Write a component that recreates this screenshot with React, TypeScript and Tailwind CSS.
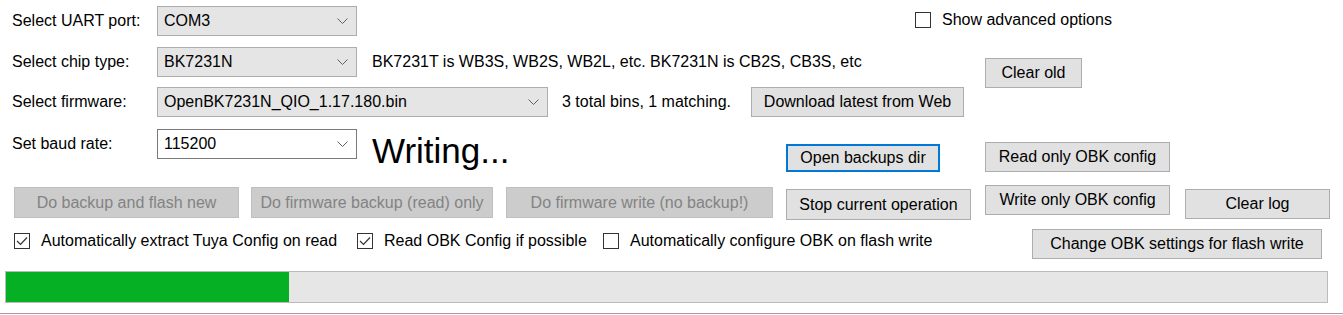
import React from "react";

function Chevron() {
  return (
    <svg width="11" height="7" viewBox="0 0 11 7" className="shrink-0">
      <polyline points="0.5,0.5 5.5,5.5 10.5,0.5" fill="none" stroke="#606060" strokeWidth="1" />
    </svg>
  );
}

function Combo({ value, className }: { value: string; className: string }) {
  return (
    <div className={`flex h-[30px] shrink-0 items-center justify-between pl-[6px] pr-[8px] ${className}`}>
      <span>{value}</span>
      <Chevron />
    </div>
  );
}

function Btn({
  children,
  className,
  disabled = false,
  focused = false,
}: {
  children: React.ReactNode;
  className: string;
  disabled?: boolean;
  focused?: boolean;
}) {
  const look = disabled
    ? "border border-[#bfbfbf] bg-[#cccccc] text-[#838383]"
    : focused
    ? "border-2 border-[#0078d7] bg-[#e1e1e1] text-black"
    : "border border-[#adadad] bg-[#e1e1e1] text-black";
  return (
    <div className={`flex shrink-0 items-center justify-center whitespace-nowrap ${look} ${className}`}>
      {children}
    </div>
  );
}

function Check({ checked, label, className }: { checked: boolean; label: string; className: string }) {
  return (
    <div className={`flex shrink-0 items-center whitespace-nowrap ${className}`}>
      <div className="flex h-[16px] w-[16px] shrink-0 items-center justify-center border border-[#333333] bg-white">
        {checked && (
          <svg width="12" height="10" viewBox="0 0 12 10">
            <polyline points="1,5 4.5,8.5 11,1.5" fill="none" stroke="#333333" strokeWidth="1.2" />
          </svg>
        )}
      </div>
      <span className="ml-[11px]">{label}</span>
    </div>
  );
}

export default function App() {
  const progress = 21.4;

  return (
    <div className="h-[315px] w-[1343px] overflow-hidden bg-white font-['Liberation_Sans',Arial,sans-serif] text-[16px] text-black">
      <div className="flex">
        {/* left part */}
        <div className="flex w-[985px] shrink-0 flex-col">
          <div className="mt-[6px] flex h-[30px] items-center">
            <span className="w-[157px] shrink-0 pl-[12px]">Select UART port:</span>
            <Combo value="COM3" className="w-[200px] border border-[#adadad] bg-[#e5e5e5]" />
            <Check checked={false} label="Show advanced options" className="ml-[558px] -mt-[2px]" />
          </div>

          <div className="mt-[11px] flex h-[30px] items-center">
            <span className="w-[157px] shrink-0 pl-[12px]">Select chip type:</span>
            <Combo value="BK7231N" className="w-[200px] border border-[#adadad] bg-[#e5e5e5]" />
            <span className="ml-[15px] whitespace-nowrap">
              BK7231T is WB3S, WB2S, WB2L, etc. BK7231N is CB2S, CB3S, etc
            </span>
          </div>

          <div className="mt-[10px] flex h-[30px] items-center">
            <span className="w-[157px] shrink-0 pl-[12px]">Select firmware:</span>
            <Combo value="OpenBK7231N_QIO_1.17.180.bin" className="w-[391px] border border-[#adadad] bg-[#e5e5e5]" />
            <span className="ml-[14px] w-[189px] shrink-0 whitespace-nowrap">3 total bins, 1 matching.</span>
            <Btn className="h-[30px] w-[213px]">Download latest from Web</Btn>
          </div>

          <div className="mt-[12px] flex h-[30px] items-start">
            <span className="mt-[3px] w-[157px] shrink-0 pl-[12px]">Set baud rate:</span>
            <Combo value="115200" className="w-[200px] border border-[#7a7a7a] bg-white" />
            <span className="ml-[15px] mt-[2px] w-[414px] shrink-0 text-[35px] leading-[40px]">Writing...</span>
            <Btn focused className="mt-[15px] h-[28px] w-[154px]">
              Open backups dir
            </Btn>
          </div>

          <div className="mt-[28px] flex h-[31px] items-start pl-[14px]">
            <Btn disabled className="h-[31px] w-[225px]">
              Do backup and flash new
            </Btn>
            <Btn disabled className="ml-[12px] h-[31px] w-[242px]">
              Do firmware backup (read) only
            </Btn>
            <Btn disabled className="ml-[13px] h-[31px] w-[267px]">
              Do firmware write (no backup!)
            </Btn>
            <Btn className="ml-[13px] mt-[2px] h-[31px] w-[185px]">Stop current operation</Btn>
          </div>

          <div className="mt-[14px] flex h-[18px] items-center pl-[14px]">
            <Check checked label="Automatically extract Tuya Config on read" className="w-[343px]" />
            <Check checked label="Read OBK Config if possible" className="w-[246px]" />
            <Check checked={false} label="Automatically configure OBK on flash write" className="" />
          </div>
        </div>

        {/* right part */}
        <div className="flex flex-col items-start">
          <Btn className="mt-[58px] h-[30px] w-[97px]">Clear old</Btn>
          <Btn className="mt-[54px] h-[30px] w-[185px]">Read only OBK config</Btn>
          <div className="mt-[13px] flex items-start">
            <Btn className="h-[30px] w-[185px]">Write only OBK config</Btn>
            <Btn className="ml-[15px] mt-[4px] h-[30px] w-[145px]">Clear log</Btn>
          </div>
          <Btn className="ml-[47px] mt-[10px] h-[30px] w-[290px]">Change OBK settings for flash write</Btn>
        </div>
      </div>

      {/* progress */}
      <div className="ml-[5px] mt-[12px] h-[32px] w-[1323px] border border-[#bcbcbc] bg-[#e6e6e6]">
        <div className="h-full bg-[#06b025]" style={{ width: `${progress}%` }} />
      </div>
      <div className="mt-[10px] h-px w-full bg-[#a0a0a0]" />
    </div>
  );
}
